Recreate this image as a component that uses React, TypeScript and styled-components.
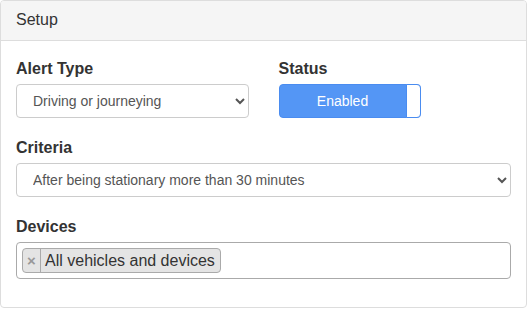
import React, { useState } from 'react';
import styled, { createGlobalStyle } from 'styled-components';

const GlobalStyle = createGlobalStyle`
  * { box-sizing: border-box; }
  body {
    margin: 0;
    background: #fff;
    font-family: "Liberation Sans", Arial, sans-serif;
    color: #333;
  }
`;

const Panel = styled.div`
  width: 527px;
  height: 308px;
  border: 1px solid #ddd;
  border-radius: 4px;
  background: #fff;
  overflow: hidden;
`;

const PanelHeading = styled.div`
  height: 40px;
  padding: 10px 15px;
  background: #f5f5f5;
  border-bottom: 1px solid #ddd;
  font-size: 16px;
  line-height: 18px;
  color: #333;
`;

const PanelBody = styled.div`
  padding: 18px 15px 15px;
  display: flex;
  flex-direction: column;
  gap: 20px;
`;

const Row = styled.div`
  display: grid;
  grid-template-columns: 1fr 1fr;
  column-gap: 30px;
`;

const Field = styled.div`
  display: flex;
  flex-direction: column;
`;

const Label = styled.label`
  font-size: 16px;
  font-weight: bold;
  line-height: 20px;
  margin-bottom: 5px;
  color: #333;
`;

const Select = styled.select`
  height: 34px;
  width: 100%;
  padding: 6px 12px;
  font-family: "Liberation Sans", Arial, sans-serif;
  font-size: 14px;
  color: #555;
  background: #fff;
  border: 1px solid #ccc;
  border-radius: 4px;
  outline: none;
`;

const Toggle = styled.button<{ $on: boolean }>`
  position: relative;
  width: 142px;
  height: 34px;
  padding: 0 14px 0 0;
  border: 1px solid #4a8cf0;
  border-radius: 4px;
  background: ${({ $on }) => ($on ? '#5496f5' : '#e6e6e6')};
  color: ${({ $on }) => ($on ? '#fff' : '#333')};
  font-family: "Liberation Sans", Arial, sans-serif;
  font-size: 14px;
  cursor: pointer;
  text-align: center;
`;

const Knob = styled.span`
  position: absolute;
  top: -1px;
  right: -1px;
  bottom: -1px;
  width: 15px;
  background: #fff;
  border: 1px solid #4a8cf0;
  border-radius: 0 4px 4px 0;
`;

const TagBox = styled.div`
  height: 37px;
  border: 1px solid #aaa;
  border-radius: 4px;
  padding: 5px 5px;
  display: flex;
  align-items: flex-start;
`;

const Tag = styled.span`
  display: inline-flex;
  align-items: stretch;
  height: 25px;
  background: #e4e4e4;
  border: 1px solid #aaa;
  border-radius: 4px;
  font-size: 16px;
  color: #333;
`;

const TagRemove = styled.span`
  width: 18px;
  display: flex;
  align-items: center;
  justify-content: center;
  color: #999;
  font-weight: bold;
  font-size: 15px;
  border-right: 1px solid #aaa;
`;

const TagText = styled.span`
  display: flex;
  align-items: center;
  padding: 0 5px 0 4px;
`;

export default function App() {
  const [enabled, setEnabled] = useState(true);

  return (
    <>
      <GlobalStyle />
      <Panel>
        <PanelHeading>Setup</PanelHeading>
        <PanelBody>
          <Row>
            <Field>
              <Label>Alert Type</Label>
              <Select defaultValue="driving">
                <option value="driving">Driving or journeying</option>
              </Select>
            </Field>
            <Field>
              <Label>Status</Label>
              <Toggle $on={enabled} onClick={() => setEnabled(!enabled)}>
                {enabled ? 'Enabled' : 'Disabled'}
                <Knob />
              </Toggle>
            </Field>
          </Row>
          <Field>
            <Label>Criteria</Label>
            <Select defaultValue="30">
              <option value="30">After being stationary more than 30 minutes</option>
            </Select>
          </Field>
          <Field>
            <Label>Devices</Label>
            <TagBox>
              <Tag>
                <TagRemove>×</TagRemove>
                <TagText>All vehicles and devices</TagText>
              </Tag>
            </TagBox>
          </Field>
        </PanelBody>
      </Panel>
    </>
  );
}
